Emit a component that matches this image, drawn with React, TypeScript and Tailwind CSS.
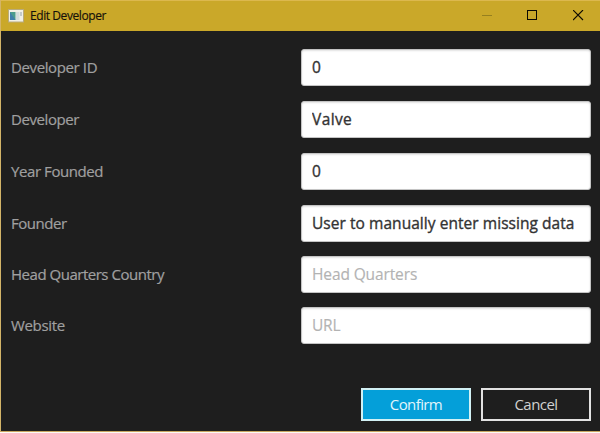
import React from "react";

type Field = {
  label: string;
  labelClass: string;
  value?: string;
  placeholder?: string;
  inputClass: string;
  gap: string;
};

const fields: Field[] = [
  { label: "Developer ID", labelClass: "tracking-[-0.38px]", value: "0", inputClass: "tracking-normal", gap: "mt-0" },
  { label: "Developer", labelClass: "tracking-[-0.42px]", value: "Valve", inputClass: "tracking-[0.4px]", gap: "mt-[15px]" },
  { label: "Year Founded", labelClass: "tracking-[-0.42px]", value: "0", inputClass: "tracking-normal", gap: "mt-[15px]" },
  { label: "Founder", labelClass: "tracking-[-0.45px]", value: "User to manually enter missing data", inputClass: "tracking-[0.05px]", gap: "mt-[15px]" },
  { label: "Head Quarters Country", labelClass: "tracking-[-0.48px]", placeholder: "Head Quarters", inputClass: "tracking-[-0.12px]", gap: "mt-[14px]" },
  { label: "Website", labelClass: "tracking-[-0.35px]", placeholder: "URL", inputClass: "tracking-[-0.2px]", gap: "mt-[14px]" },
];

function WindowIcon() {
  return (
    <svg width="16" height="14" viewBox="0 0 16 14" className="block shrink-0">
      <rect x="0.5" y="0.5" width="15" height="12.5" fill="#f1f0e6" stroke="#b9ab7c" />
      <rect x="2" y="3" width="5.5" height="8" fill="#4b9c8c" />
      <path d="M2 3V11H7.5Z" fill="#407faa" />
      <rect x="8" y="3" width="3.5" height="8" fill="#d3dcdc" />
      <rect x="12" y="3" width="2" height="4" fill="#c3c9c9" />
    </svg>
  );
}

function TitleBar() {
  return (
    <header className="flex h-[31px] shrink-0 items-center border-t border-[#dcb84e] bg-[#caa829] pb-px pl-[7px]">
      <WindowIcon />
      <h1 className="ml-[6px] pt-px text-[12px] leading-4 tracking-[-0.42px] text-[#15100a] [-webkit-text-stroke:0.15px_#15100a]">Edit Developer</h1>
      <div className="ml-auto flex h-full">
        <button aria-label="Minimize" className="flex w-[46px] items-center justify-center">
          <svg width="11" height="11" viewBox="0 0 11 11"><path d="M0 5.5H10" stroke="#96801f" /></svg>
        </button>
        <button aria-label="Maximize" className="flex w-[45px] items-center justify-center">
          <svg width="11" height="11" viewBox="0 0 11 11" fill="none"><rect x="0.5" y="0.5" width="9" height="9" stroke="#0d0a02" /></svg>
        </button>
        <button aria-label="Close" className="flex w-[45px] items-center justify-center pl-0.5">
          <svg width="11" height="11" viewBox="0 0 11 11"><path d="M0 0L10 10M10 0L0 10" stroke="#0d0a02" strokeWidth="1.1" /></svg>
        </button>
      </div>
    </header>
  );
}

export default function App() {
  return (
    <div className="flex h-[433px] w-[600px] flex-col overflow-hidden bg-[#1e1e1e] font-['Noto_Sans','Open_Sans',sans-serif]">
      <div className="flex h-[431px] flex-col border-l border-[#d3b468] font-['Open_Sans','Noto_Sans',sans-serif]">
        <TitleBar />
        <form className="mt-[18px] flex flex-col pr-[9px] pl-[10px]">
          {fields.map((f) => (
            <div key={f.label} className={`flex h-[37px] items-center ${f.gap}`}>
              <label className={`w-[290px] pb-[2px] text-[15px] leading-5 text-[#a0a0a0] [-webkit-text-stroke:0.2px_#a0a0a0] ${f.labelClass}`}>{f.label}</label>
              <input
                readOnly
                value={f.value ?? ""}
                placeholder={f.placeholder}
                className={`h-[37px] w-[290px] rounded-[3px] border border-[#c4c4c4] bg-white px-[10px] pb-[2px] text-[15.5px] text-[#333333] shadow-[inset_0_1px_2px_#e2e2e2] [-webkit-text-stroke:0.35px] placeholder:text-[#b3b3b3] placeholder:[-webkit-text-stroke:0.15px] ${f.inputClass}`}
              />
            </div>
          ))}
        </form>
        <div className="mt-[44px] flex justify-end gap-[10px] pr-[9px]">
          <button className="h-[33px] w-[110px] border-2 border-[#d2f1f4] bg-[#049fd9] pb-px text-[15px] leading-5 tracking-[-0.6px] text-[#e2f5fb]">Confirm</button>
          <button className="h-[33px] w-[110px] border-2 border-[#e2e2e2] pb-px text-[15px] leading-5 tracking-[-0.55px] text-[#d0d0d0]">Cancel</button>
        </div>
      </div>
      <div className="h-px shrink-0 bg-[#c9a760]" />
      <div className="h-px shrink-0 bg-[#fdfaf3]" />
    </div>
  );
}
